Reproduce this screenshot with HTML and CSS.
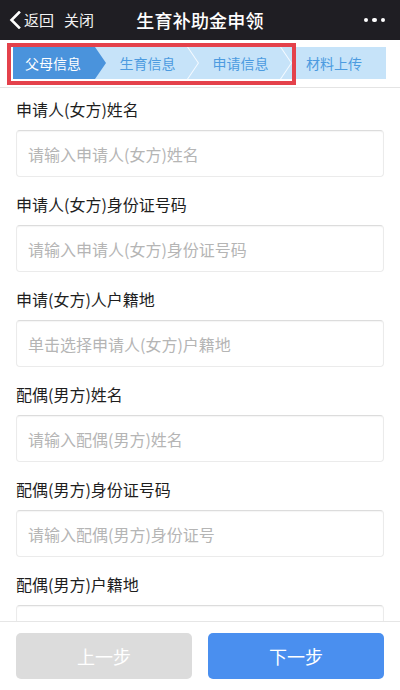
FILE: index.html
```html
<!DOCTYPE html>
<html lang="zh-CN">
<head>
<meta charset="utf-8">
<title>生育补助金申领</title>
<link rel="stylesheet" href="styles.css">
</head>
<body>
<div class="app">
  <header class="topbar">
    <div class="nav-left">
      <svg class="back-icon" width="12" height="18" viewBox="0 0 12 18"><polyline points="10,1.5 2.5,9 10,16.5" fill="none" stroke="#fff" stroke-width="2.6" stroke-linecap="square"/></svg>
      <span class="nav-link">返回</span>
      <span class="nav-link close">关闭</span>
    </div>
    <h1 class="title">生育补助金申领</h1>
    <div class="nav-right">
      <span class="dot"></span><span class="dot"></span><span class="dot"></span>
    </div>
  </header>

  <section class="steps-wrap">
    <div class="steps">
      <div class="step active">父母信息</div>
      <div class="step chevron">生育信息</div>
      <div class="step chevron">申请信息</div>
      <div class="step last">材料上传</div>
      <div class="highlight"></div>
    </div>
  </section>

  <main class="form">
    <div class="field">
      <label class="label">申请人(女方)姓名</label>
      <input class="input" type="text" placeholder="请输入申请人(女方)姓名">
    </div>
    <div class="field">
      <label class="label">申请人(女方)身份证号码</label>
      <input class="input" type="text" placeholder="请输入申请人(女方)身份证号码">
    </div>
    <div class="field">
      <label class="label">申请(女方)人户籍地</label>
      <input class="input" type="text" readonly placeholder="单击选择申请人(女方)户籍地">
    </div>
    <div class="field">
      <label class="label">配偶(男方)姓名</label>
      <input class="input" type="text" placeholder="请输入配偶(男方)姓名">
    </div>
    <div class="field">
      <label class="label">配偶(男方)身份证号码</label>
      <input class="input" type="text" placeholder="请输入配偶(男方)身份证号">
    </div>
    <div class="field">
      <label class="label">配偶(男方)户籍地</label>
      <input class="input" type="text" readonly placeholder="单击选择配偶(男方)户籍地">
    </div>
  </main>

  <footer class="actions">
    <button class="btn btn-prev" type="button">上一步</button>
    <button class="btn btn-next" type="button">下一步</button>
  </footer>
</div>
</body>
</html>
```

FILE: styles.css
```css
* { box-sizing: border-box; }

html, body {
  margin: 0;
  padding: 0;
  height: 100%;
  background: #fff;
  font-family: "Noto Sans CJK SC", "Noto Sans", sans-serif;
  color: #222;
}

.app {
  height: 100vh;
  display: flex;
  flex-direction: column;
  overflow: hidden;
}

/* Top bar */
.topbar {
  height: 40px;
  flex: none;
  background: #1f1e23;
  display: grid;
  grid-template-columns: 1fr auto 1fr;
  align-items: center;
  color: #fff;
}

.nav-left {
  display: flex;
  align-items: center;
  padding-left: 9px;
}

.back-icon {
  display: block;
  margin-right: 3px;
}

.nav-link {
  font-size: 15px;
  line-height: 20px;
  color: #f2f2f2;
}

.nav-link.close {
  margin-left: 10px;
}

.title {
  margin: 0;
  font-size: 18px;
  font-weight: 500;
  line-height: 24px;
  letter-spacing: 0.2px;
  color: #fff;
}

.nav-right {
  display: flex;
  justify-content: flex-end;
  align-items: center;
  gap: 4px;
  padding-right: 15px;
}

.dot {
  width: 4.5px;
  height: 4.5px;
  border-radius: 50%;
  background: #fff;
}

/* Steps */
.steps-wrap {
  flex: none;
  padding: 7px 14px 8px 13px;
  border-bottom: 1px solid #e4e4e4;
}

.steps {
  position: relative;
  display: flex;
  height: 32px;
  background: #c6e3f9;
}

.step {
  position: relative;
  width: 93px;
  flex: none;
  display: flex;
  align-items: center;
  justify-content: center;
  padding-right: 10px;
  font-size: 14px;
  color: #4c9be0;
}

.step.last {
  flex: 1;
  width: auto;
}

.step.active {
  background: #4a93dc;
  color: #fff;
  padding-right: 13px;
  clip-path: polygon(0 0, calc(100% - 11px) 0, 100% 50%, calc(100% - 11px) 100%, 0 100%);
}

.step.chevron::after {
  content: "";
  position: absolute;
  top: 0;
  right: 0;
  width: 12px;
  height: 100%;
  background: #f4faff;
  clip-path: polygon(0 0, 1.2px 0, 100% 50%, 1.2px 100%, 0 100%, calc(100% - 1.2px) 50%);
}

/* annotation outline */
.highlight {
  position: absolute;
  left: -6px;
  top: -4px;
  width: 289px;
  height: 42px;
  border: 4.5px solid #e4414b;
  pointer-events: none;
}

/* Form */
.form {
  flex: 1;
  overflow: hidden;
  padding: 10px 16px 0;
  display: flex;
  flex-direction: column;
  gap: 16px;
}

.field {
  display: flex;
  flex-direction: column;
  flex: none;
}

.label {
  font-size: 16px;
  line-height: 22px;
  color: #1e1e1e;
  margin-bottom: 10px;
}

.input {
  height: 47px;
  width: 100%;
  border: 1px solid #ebebeb;
  border-top-color: #dcdcdc;
  border-radius: 4px;
  box-shadow: inset 0 1px 1px rgba(0, 0, 0, 0.04);
  padding: 0 11px;
  font-family: inherit;
  font-size: 16px;
  color: #333;
  background: #fff;
  outline: none;
}

.input::placeholder {
  color: #b5b5b5;
}

/* Bottom actions */
.actions {
  flex: none;
  border-top: 1px solid #e6e6e6;
  background: #fff;
  padding: 11px 16px;
  display: flex;
  gap: 16px;
}

.btn {
  flex: 1;
  height: 46px;
  border: none;
  border-radius: 5px;
  font-family: inherit;
  font-size: 18px;
  color: #fff;
}

.btn-prev {
  background: #dcdcdc;
}

.btn-next {
  background: #4a8fef;
}
```
